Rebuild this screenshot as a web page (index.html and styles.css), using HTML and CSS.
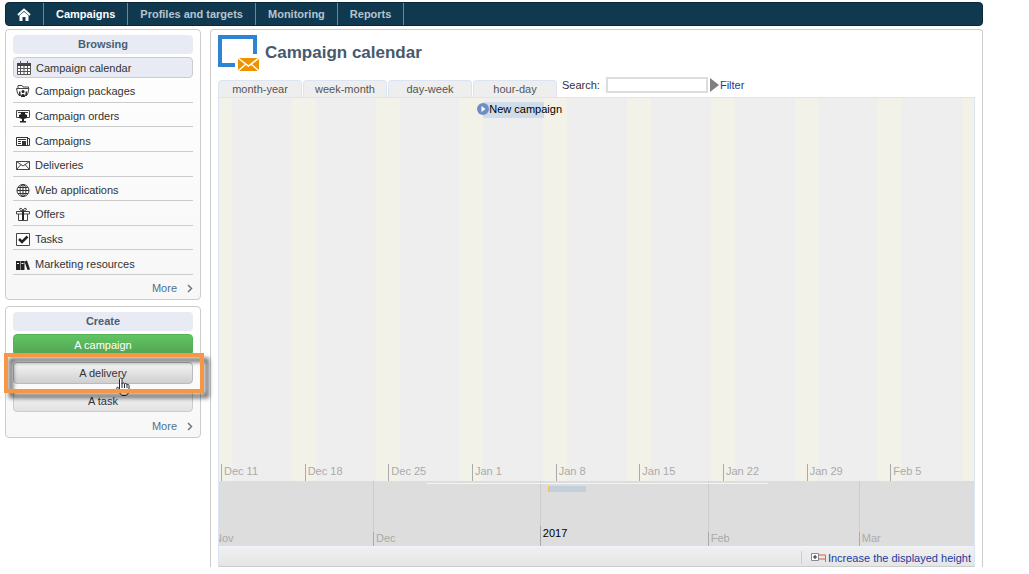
FILE: index.html
```
<!DOCTYPE html>
<html lang="en">
<head>
    <meta charset="UTF-8">
    <meta name="viewport" content="width=device-width, initial-scale=1.0">
    <title>Campaign calendar</title>
    <link rel="stylesheet" href="styles.css">
</head>
<body>
    <nav class="topbar">
        <a href="#" class="home" aria-label="Home">
            <svg width="14" height="13" viewBox="0 0 14 13"><path d="M1 7 7 1.500 13 7" fill="none" stroke="#fff" stroke-width="2"/><path d="M2.500 7.500 7 3.700l4.500 3.800V13H8.500V9h-3v4h-3z" fill="#fff"/></svg>
        </a>
        <a href="#" class="active">Campaigns</a>
        <a href="#">Profiles and targets</a>
        <a href="#">Monitoring</a>
        <a href="#">Reports</a>
    </nav>

    <div class="page">
        <aside class="sidebar">
            <section class="panel">
                <h2>Browsing</h2>
                <ul class="menu">
                    <li class="selected"><a href="#">
                        <svg viewBox="0 0 14 14"><path d="M.5 2.500h13v11H.5z" fill="#fff" stroke="#555"/><path d="M0 2h14v3H0z" fill="#444"/><path d="M3.500 0v3M10.500 0v3M1 7.500h12M1 10.500h12M3.500 5v8M7 5v8M10.500 5v8" stroke="#555" fill="none"/></svg>
                        Campaign calendar</a></li>
                    <li><a href="#">
                        <svg viewBox="0 0 14 14"><path d="M3 11.500 1.500 9 .5 4.500h12.500l-1.500 6-1 1M2 4.500v-3h4l1 1.500h5.500v2" fill="none" stroke="#444"/><circle cx="7" cy="7.500" r="1.500" fill="#222"/><path d="M5 13c-.5-4 4.500-4 4 0z" fill="#222"/><path d="M3 7.500h1.500v2L5 12H3zM9.500 7.500H11V12H9l.5-2.500z" fill="#333"/></svg>
                        Campaign packages</a></li>
                    <li><a href="#">
                        <svg viewBox="0 0 14 14"><path d="M3 8.500H.5v-7h13v7H11M2 3.500h3M9 3.500h3" fill="none" stroke="#444"/><path d="M5 3h4v2l2 1v3L8 10v2h2v1.500H4V12h2v-2L3 9V6l2-1z" fill="#222"/></svg>
                        Campaign orders</a></li>
                    <li><a href="#">
                        <svg viewBox="0 0 14 14"><path d="M.5 3.500h11v8H.5zM11.500 3v8.500h2v-7h-2" fill="#fff" stroke="#333"/><path d="M2 5.500h8M2 7.500h3M2 9.500h3" stroke="#333"/><path d="M6 7h4v4H6z" fill="#333"/></svg>
                        Campaigns</a></li>
                    <li><a href="#">
                        <svg viewBox="0 0 14 14"><path d="M.5 3.500h13v8H.5zM.5 3.500 7 8l6.500-4.500M.5 11.500l4.500-5M13.500 11.500 9 6.500" fill="none" stroke="#444"/></svg>
                        Deliveries</a></li>
                    <li><a href="#">
                        <svg viewBox="0 0 14 14"><circle cx="7" cy="7.500" r="6" fill="#fff" stroke="#333"/><ellipse cx="7" cy="7.500" rx="3" ry="6" fill="none" stroke="#333"/><path d="M7 1.500v12M1 7.500h12M2 4.500h10M2 10.500h10" stroke="#333"/></svg>
                        Web applications</a></li>
                    <li><a href="#">
                        <svg viewBox="0 0 14 14"><path d="M2.500 7v6.500h9V7M.5 4.500h13v2.500H.5z" fill="#fff" stroke="#444"/><path d="M7 4v9" stroke="#222" stroke-width="2"/><path d="M7 4C4 4 3 2 4 1.500S7 2 7 4c0-2 2-3 3-2.500S10 4 7 4" fill="none" stroke="#333"/></svg>
                        Offers</a></li>
                    <li><a href="#">
                        <svg viewBox="0 0 14 14"><path d="M.5 1.500h13v12H.5z" fill="#fff" stroke="#444"/><path d="m3 7 3 3 5.500-5.500" fill="none" stroke="#222" stroke-width="2.500"/></svg>
                        Tasks</a></li>
                    <li><a href="#">
                        <svg viewBox="0 0 14 14"><path d="M0 4h4v9H0zM4.500 4h4v9h-4zM8.500 4.500l2.500-1 3 9-2.500.5z" fill="#222"/><path d="M1 6.500h2M5.500 6.500h2" stroke="#fff"/></svg>
                        Marketing resources</a></li>
                </ul>
                <a href="#" class="more">More
                    <svg width="6" height="9" viewBox="0 0 6 9"><path d="m1 1 3.500 3.500L1 8" fill="none" stroke="#777" stroke-width="1.500"/></svg>
                </a>
            </section>

            <section class="panel">
                <h2>Create</h2>
                <div class="actions">
                    <button type="button" class="primary">A campaign</button>
                    <div class="highlighted">
                        <button type="button">A delivery</button>
                        <svg class="pointer" width="14" height="20" viewBox="0 0 14 20"><path d="M3.500 12V2.500c0-2 2.500-2 2.500 0V7c0-1.500 2.500-1.500 2.500.5 0-1.500 2.500-1.500 2.500.5 0-1 2-1 2 .5V13c0 3-1.500 5.500-4 5.500H7c-2 0-3-2-4-4L.8 11.500c-.5-1.500 1.200-2 2.700.5z" fill="#fff" stroke="#223" stroke-width="1"/><path d="M6 7v4M8.500 7.500V11M11 8v3" stroke="#223"/></svg>
                        <span class="frame"></span>
                    </div>
                    <button type="button">A task</button>
                </div>
                <a href="#" class="more">More
                    <svg width="6" height="9" viewBox="0 0 6 9"><path d="m1 1 3.500 3.500L1 8" fill="none" stroke="#777" stroke-width="1.500"/></svg>
                </a>
            </section>
        </aside>

        <main class="content">
            <header class="title">
                <svg width="41" height="37" viewBox="0 0 41 37"><path d="M17 30H2V2h35v17" fill="none" stroke="#2e84d2" stroke-width="4"/><path d="M20 23h21v13H20z" fill="#ee9200"/><path d="m20 23 10.500 8L41 23M20 36l8-7M41 36l-8-7" fill="none" stroke="#fff" stroke-width="1.500"/></svg>
                <h1>Campaign calendar</h1>
            </header>

            <div class="toolbar">
                <div class="tabs">
                    <button type="button">month-year</button>
                    <button type="button">week-month</button>
                    <button type="button">day-week</button>
                    <button type="button">hour-day</button>
                </div>
                <form class="search">
                    <label for="search">Search:</label>
                    <input type="text" id="search">
                    <a href="#"><svg width="9" height="14" viewBox="0 0 9 14"><path d="M0 0v14l9-7z" fill="#808080"/></svg>Filter</a>
                </form>
            </div>

            <div class="calendar">
                <div class="weeks">
                    <div class="stripes">
                        <i class="first"></i><b></b><i></i><b></b><i></i><b></b><i></i><b></b><i></i><b></b><i></i><b></b><i></i><b></b><i></i><b></b><i></i><b></b><i class="last"></i>
                    </div>
                    <a href="#" class="event" style="left: 35%; width: 8%">
                        <svg width="12" height="12" viewBox="0 0 12 12"><circle cx="6" cy="6" r="6" fill="#6d8fc4"/><path d="M4.500 3v6L8.500 6z" fill="#fff"/></svg>
                        New campaign
                    </a>
                    <div class="week-labels">
                        <span>Dec 11</span>
                        <span>Dec 18</span>
                        <span>Dec 25</span>
                        <span>Jan 1</span>
                        <span>Jan 8</span>
                        <span>Jan 15</span>
                        <span>Jan 22</span>
                        <span>Jan 29</span>
                        <span>Feb 5</span>
                    </div>
                </div>
                <div class="months">
                    <div class="month clipped" style="flex-grow: 155"><span>Nov</span></div>
                    <div class="month" style="flex-grow: 167"><span>Dec</span></div>
                    <div class="month year" style="flex-grow: 168"><span>2017</span></div>
                    <div class="month" style="flex-grow: 151"><span>Feb</span></div>
                    <div class="month" style="flex-grow: 115"><span>Mar</span></div>
                    <div class="range" style="left: 27.5%; width: 45.2%"></div>
                    <div class="mini-event" style="left: 43.6%; width: 5%"></div>
                </div>
                <footer class="statusbar">
                    <a href="#">
                        <svg width="15" height="9" viewBox="0 0 15 9"><path d="M.5.500h7v7h-7z" fill="#fff" stroke="#889"/><path d="M2 4h4M4 2v4" stroke="#223"/><path d="M8 2h6.500M8 6h6.500" stroke="#d65a45"/><path d="M14.500 2v7" stroke="#888"/></svg>Increase the displayed height</a>
                </footer>
            </div>
        </main>
    </div>
</body>
</html>
```
FILE: styles.css
```
* {
    box-sizing: border-box;
}
body {
    display: flex;
    flex-direction: column;
    min-height: 100vh;
    margin: 0;
    padding: 2px 46px 7px 5px;
    background-color: #fff;
    color: #333;
    font-family: "Liberation Sans", Arial, sans-serif;
    font-size: 11px;
    line-height: 14px;
}
a {
    color: inherit;
    text-decoration: none;
}
button, input {
    font: inherit;
    color: inherit;
}
h1, h2, ul {
    margin: 0;
    padding: 0;
}

/* top navigation */
.topbar {
    display: flex;
    height: 24px;
    background-color: #10384f;
    border: 1px solid #08293c;
    border-radius: 4px;
    font-weight: bold;
    color: #b4c5cf;
}
.topbar a {
    display: flex;
    align-items: center;
    padding: 0 12px;
    border-right: 1px solid #71868f;
}
.topbar .home {
    padding: 0 12px 0 11px;
}
.topbar .active {
    color: #fff;
}

.page {
    display: flex;
    flex: 1;
    gap: 9px;
    padding-top: 3px;
}

/* sidebar */
.sidebar {
    display: flex;
    flex-direction: column;
    gap: 6px;
    width: 196px;
    flex-shrink: 0;
}
.panel {
    display: flex;
    flex-direction: column;
    padding: 5px 7px 4px 7px;
    border: 1px solid #ccc;
    border-radius: 4px;
    background: linear-gradient(#fff, #f7f7f7);
}
.panel h2 {
    padding: 2px 0 3px;
    border-radius: 4px;
    background-color: #e8ebf3;
    color: #4a5f75;
    font-size: 11px;
    line-height: 14px;
    text-align: center;
}
.menu {
    display: grid;
    grid-template-rows: 21px repeat(8, 1fr);
    height: 218px;
    margin: 3px 0 2px;
    list-style: none;
}
.menu li {
    display: flex;
    align-items: center;
    border-bottom: 1px solid #ccc;
}
.menu .selected {
    border: 1px solid #ccc;
    border-radius: 4px;
    background-color: #e8ebf3;
}
.menu a {
    display: flex;
    align-items: center;
    gap: 5px;
    width: 100%;
    padding: 3px 3px 0;
}
.menu .selected a {
    padding-top: 0;
}
.menu svg {
    width: 14px;
    height: 14px;
}
.more {
    display: flex;
    align-items: center;
    justify-content: flex-end;
    gap: 10px;
    height: 18px;
    padding-top: 4px;
    color: #4e7391;
}
.actions {
    display: flex;
    flex-direction: column;
    gap: 6px;
    margin: 3px 0;
}
.actions button {
    width: 100%;
    height: 22px;
    padding: 0;
    border: 1px solid #ccc;
    border-radius: 4px;
    background: linear-gradient(#f7f7f7, #e2e2e2);
}
.actions .primary {
    border-color: #55b155;
    background: linear-gradient(#62c462, #51a351);
    color: #fff;
}
.highlighted {
    position: relative;
    display: flex;
}
.highlighted button {
    border-color: #bbb;
    background: linear-gradient(#f5f5f5, #cfcfcf);
}
.frame {
    position: absolute;
    inset: -9px -11px -9px -9px;
    border: 4px solid #f79646;
    filter: drop-shadow(5px 5px 2px rgba(0, 0, 0, 0.6));
    pointer-events: none;
}
.pointer {
    position: absolute;
    top: 15px;
    left: 103px;
}

/* main panel */
.content {
    display: flex;
    flex: 1;
    flex-direction: column;
    padding: 5px 7px 0;
    border: 1px solid #ccc;
    border-bottom: none;
    border-radius: 4px 4px 0 0;
}
.title {
    display: flex;
    align-items: center;
    gap: 6px;
}
.title h1 {
    padding-bottom: 2px;
    color: #47596d;
    font-size: 17px;
    line-height: 20px;
}
.toolbar {
    display: flex;
    align-items: flex-end;
    gap: 5px;
    height: 25px;
}
.tabs {
    display: flex;
    gap: 1px;
}
.tabs button {
    width: 84px;
    height: 17px;
    padding: 0;
    border: 1px solid #dbe4f3;
    border-bottom: none;
    border-radius: 4px 4px 0 0;
    background-color: #eee;
    color: #555;
    line-height: 14px;
}
.search {
    display: flex;
    align-items: center;
    padding-bottom: 4px;
}
.search input {
    width: 102px;
    height: 16px;
    margin: 0 2px 0 6px;
    border: 2px solid #ddd;
    padding: 0 2px;
    background-color: #fff;
}
.search a {
    display: flex;
    align-items: center;
    gap: 1px;
    color: #1a3c9c;
}

/* calendar */
.calendar {
    display: flex;
    flex: 1;
    flex-direction: column;
    border: 1px solid #dbe4f3;
    border-bottom-color: #ccc;
}
.weeks {
    position: relative;
    display: flex;
    flex: 1;
    flex-direction: column;
    justify-content: flex-end;
}
.stripes {
    position: absolute;
    inset: 0;
    display: flex;
    background-color: #eee;
}
.stripes i {
    flex: 24;
    background-color: #f2f2e8;
}
.stripes b {
    flex: 60;
}
.stripes .first {
    flex: 13;
}
.stripes .last {
    flex: 12;
}
.event {
    position: absolute;
    top: 4px;
    display: flex;
    align-items: center;
    height: 16px;
    padding-bottom: 3px;
    background-color: #cfddea;
    color: #000;
    white-space: nowrap;
}
.event svg {
    flex-shrink: 0;
    margin-left: -6px;
}
.week-labels {
    position: relative;
    display: grid;
    grid-template-columns: repeat(9, 1fr);
    padding-left: 2px;
    color: #aaa;
}
.week-labels span {
    height: 17px;
    padding-left: 2px;
    border-left: 1px solid #aaa;
}
.months {
    position: relative;
    display: flex;
    height: 65px;
    overflow: hidden;
    background-color: #ddd;
    color: #aaa;
}
.month {
    display: flex;
    flex: 1 1 0;
    align-items: flex-end;
    border-left: 1px solid #ccc;
}
.month span {
    height: 14px;
    margin-left: -1px;
    padding-left: 2px;
    border-left: 1px solid #aaa;
    line-height: 12px;
}
.month.clipped, .month.clipped span {
    border-left: none;
}
.month.clipped span {
    margin-left: -7px;
}
.month.year span {
    height: 20px;
    color: #000;
    line-height: 14px;
}
.range {
    position: absolute;
    top: 2px;
    height: 1px;
    background-color: #f4f4f4;
}
.mini-event {
    position: absolute;
    top: 5px;
    height: 6px;
    border-left: 1px solid #f5c25b;
    background-color: #c1cfdb;
}
.statusbar {
    display: flex;
    justify-content: flex-end;
    height: 20px;
    padding: 4px 3px 2px;
    border-top: 1px solid #f0f5fc;
    background: linear-gradient(#f0f0f0, #e5e5e5);
}
.statusbar a {
    display: flex;
    align-items: center;
    gap: 2px;
    padding-left: 9px;
    border-left: 1px solid #ccc;
    color: #1a3c9c;
}
```
